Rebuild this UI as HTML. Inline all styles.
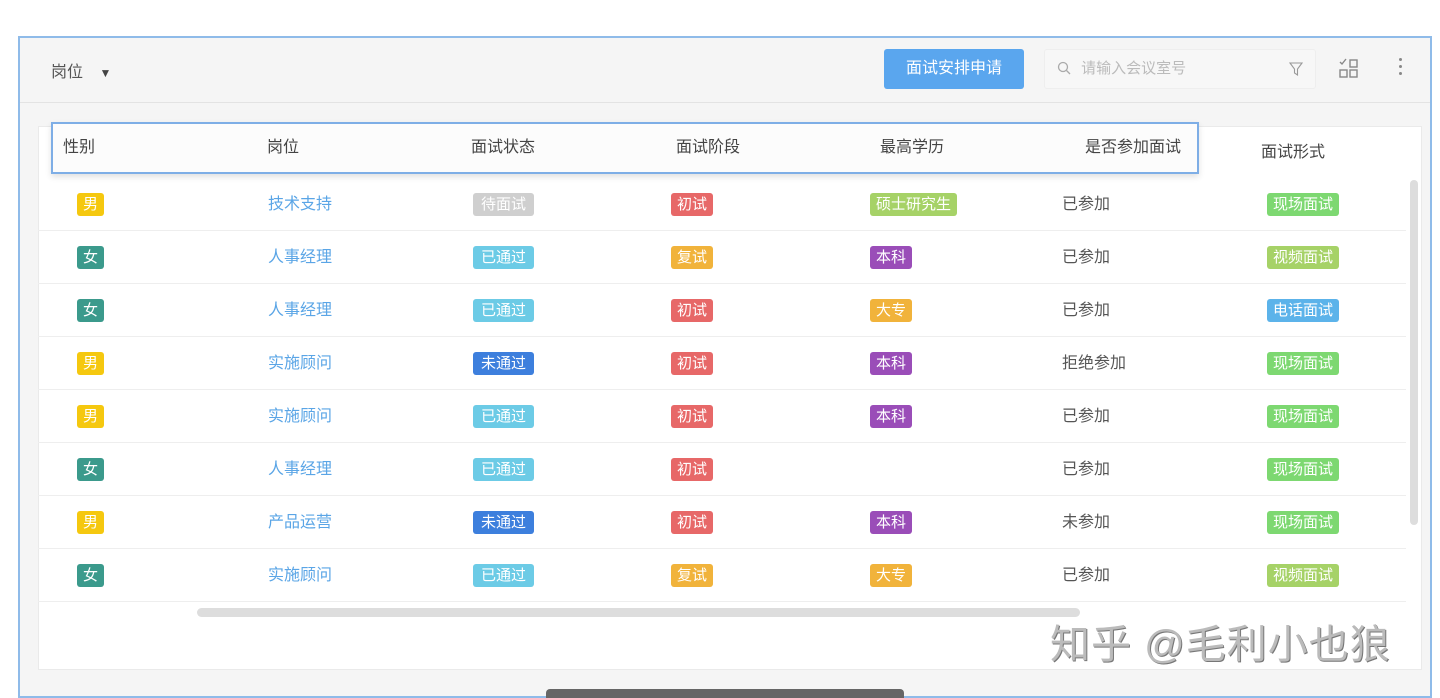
<!DOCTYPE html>
<html><head><meta charset="utf-8"><style>
*{margin:0;padding:0;box-sizing:border-box}
body{width:1440px;height:698px;background:#fff;position:relative;overflow:hidden;font-family:"Liberation Sans","Noto Sans CJK SC",sans-serif;font-size:16px;color:#555}
.frame{position:absolute;left:18px;top:36px;width:1414px;height:662px;border:2px solid #8fbbe9;background:#f5f5f5}
.a{position:absolute}
.card{left:18px;top:88px;width:1384px;height:544px;background:#fff;border:1px solid #eaeaea}
.tag{position:absolute;height:23px;line-height:23px;color:#fff;font-size:15px;border-radius:3px;padding:0 6px;text-align:center}
.row{position:absolute;left:38px;width:1368px;height:53px;border-bottom:1px solid #eee}
.t{position:absolute;line-height:23px;font-size:16px}
.link{color:#5aa5e6}
</style></head><body>
<div class="frame">
 <div class="a" style="left:31px;top:20px;font-size:16px;color:#555">岗位 <span style="font-size:12px;margin-left:12px;color:#444">▼</span></div>
 <div class="a" style="left:0;top:64px;width:1410px;height:1px;background:#e3e3e3"></div>
 <div class="a" style="left:864px;top:11px;width:140px;height:40px;background:#5aa6ee;border-radius:3px;color:#fff;text-align:center;line-height:40px;font-size:16px">面试安排申请</div>
 <div class="a" style="left:1024px;top:11px;width:272px;height:40px;background:#f7f7f7;border:1px solid #eee;border-radius:3px;color:#bbb;line-height:38px;font-size:15px;padding-left:12px">
  <svg width="14" height="14" viewBox="0 0 14 14" style="vertical-align:-2px"><circle cx="6" cy="6" r="4.5" fill="none" stroke="#aaa" stroke-width="1.3"/><path d="M9.5 9.5L13 13" stroke="#aaa" stroke-width="1.3"/></svg>
  <span style="margin-left:6px">请输入会议室号</span>
  <svg class="a" style="left:244px;top:12px" width="14" height="14" viewBox="0 0 14 14"><path d="M1 1H13L8.5 7V13L5.5 11V7Z" fill="none" stroke="#999" stroke-width="1.1"/></svg>
 </div>
 <svg class="a" style="left:1318px;top:20px" width="22" height="22" viewBox="0 0 22 22" fill="none" stroke="#888" stroke-width="1.4"><path d="M2 4L4 6L8 1"/><rect x="12" y="2" width="7" height="7"/><rect x="2" y="12" width="7" height="7"/><rect x="12" y="12" width="7" height="7"/></svg>
 <div class="a" style="left:1379px;top:20px;width:4px;">
  <div style="width:3px;height:3px;background:#888;border-radius:50%;margin-bottom:4px"></div><div style="width:3px;height:3px;background:#888;border-radius:50%;margin-bottom:4px"></div><div style="width:3px;height:3px;background:#888;border-radius:50%"></div></div>

 <div class="a card">
  <div class="t" style="left:1222px;top:14px;color:#444">面试形式</div>
  <div class="a" style="left:12px;top:-5px;width:1148px;height:52px;border:2px solid #7eaee6;background:#fcfcfc;box-shadow:0 3px 6px rgba(0,0,0,.12)">
   <div class="t" style="left:10px;top:12px;color:#444">性别</div>
   <div class="t" style="left:214px;top:12px;color:#444">岗位</div>
   <div class="t" style="left:418px;top:12px;color:#444">面试状态</div>
   <div class="t" style="left:623px;top:12px;color:#444">面试阶段</div>
   <div class="t" style="left:827px;top:12px;color:#444">最高学历</div>
   <div class="t" style="left:1032px;top:12px;color:#444">是否参加面试</div>
  </div>
 </div>
</div>
<div class="a" style="left:1410px;top:180px;width:8px;height:345px;background:#ddd;border-radius:4px"></div>
<div class="a" style="left:197px;top:608px;width:883px;height:9px;background:#ddd;border-radius:5px"></div>
<div class="a" style="left:546px;top:689px;width:358px;height:9px;background:#666;border-radius:4px 4px 0 0"></div>

<div class="row" style="top:178px"><span class="tag" style="left:39px;top:15px;background:#f5c80f">男</span><span class="t link" style="left:230px;top:15px">技术支持</span><span class="tag" style="left:435px;top:15px;background:#cfcfcf;width:61px">待面试</span><span class="tag" style="left:633px;top:15px;background:#e76868">初试</span><span class="tag" style="left:832px;top:15px;background:#a6d267">硕士研究生</span><span class="t" style="left:1024px;top:15px">已参加</span><span class="tag" style="left:1229px;top:15px;background:#7dd871">现场面试</span></div>
<div class="row" style="top:231px"><span class="tag" style="left:39px;top:15px;background:#3b9a8c">女</span><span class="t link" style="left:230px;top:15px">人事经理</span><span class="tag" style="left:435px;top:15px;background:#6ccbe6;width:61px">已通过</span><span class="tag" style="left:633px;top:15px;background:#f1b33b">复试</span><span class="tag" style="left:832px;top:15px;background:#9a4db8">本科</span><span class="t" style="left:1024px;top:15px">已参加</span><span class="tag" style="left:1229px;top:15px;background:#a6d267">视频面试</span></div>
<div class="row" style="top:284px"><span class="tag" style="left:39px;top:15px;background:#3b9a8c">女</span><span class="t link" style="left:230px;top:15px">人事经理</span><span class="tag" style="left:435px;top:15px;background:#6ccbe6;width:61px">已通过</span><span class="tag" style="left:633px;top:15px;background:#e76868">初试</span><span class="tag" style="left:832px;top:15px;background:#f1b33b">大专</span><span class="t" style="left:1024px;top:15px">已参加</span><span class="tag" style="left:1229px;top:15px;background:#5cb3ea">电话面试</span></div>
<div class="row" style="top:337px"><span class="tag" style="left:39px;top:15px;background:#f5c80f">男</span><span class="t link" style="left:230px;top:15px">实施顾问</span><span class="tag" style="left:435px;top:15px;background:#3d7fdd;width:61px">未通过</span><span class="tag" style="left:633px;top:15px;background:#e76868">初试</span><span class="tag" style="left:832px;top:15px;background:#9a4db8">本科</span><span class="t" style="left:1024px;top:15px">拒绝参加</span><span class="tag" style="left:1229px;top:15px;background:#7dd871">现场面试</span></div>
<div class="row" style="top:390px"><span class="tag" style="left:39px;top:15px;background:#f5c80f">男</span><span class="t link" style="left:230px;top:15px">实施顾问</span><span class="tag" style="left:435px;top:15px;background:#6ccbe6;width:61px">已通过</span><span class="tag" style="left:633px;top:15px;background:#e76868">初试</span><span class="tag" style="left:832px;top:15px;background:#9a4db8">本科</span><span class="t" style="left:1024px;top:15px">已参加</span><span class="tag" style="left:1229px;top:15px;background:#7dd871">现场面试</span></div>
<div class="row" style="top:443px"><span class="tag" style="left:39px;top:15px;background:#3b9a8c">女</span><span class="t link" style="left:230px;top:15px">人事经理</span><span class="tag" style="left:435px;top:15px;background:#6ccbe6;width:61px">已通过</span><span class="tag" style="left:633px;top:15px;background:#e76868">初试</span><span class="t" style="left:1024px;top:15px">已参加</span><span class="tag" style="left:1229px;top:15px;background:#7dd871">现场面试</span></div>
<div class="row" style="top:496px"><span class="tag" style="left:39px;top:15px;background:#f5c80f">男</span><span class="t link" style="left:230px;top:15px">产品运营</span><span class="tag" style="left:435px;top:15px;background:#3d7fdd;width:61px">未通过</span><span class="tag" style="left:633px;top:15px;background:#e76868">初试</span><span class="tag" style="left:832px;top:15px;background:#9a4db8">本科</span><span class="t" style="left:1024px;top:15px">未参加</span><span class="tag" style="left:1229px;top:15px;background:#7dd871">现场面试</span></div>
<div class="row" style="top:549px"><span class="tag" style="left:39px;top:15px;background:#3b9a8c">女</span><span class="t link" style="left:230px;top:15px">实施顾问</span><span class="tag" style="left:435px;top:15px;background:#6ccbe6;width:61px">已通过</span><span class="tag" style="left:633px;top:15px;background:#f1b33b">复试</span><span class="tag" style="left:832px;top:15px;background:#f1b33b">大专</span><span class="t" style="left:1024px;top:15px">已参加</span><span class="tag" style="left:1229px;top:15px;background:#a6d267">视频面试</span></div>

<div class="a" style="left:1050px;top:612px;font-size:40px;color:#bbb;letter-spacing:1px;text-shadow:1px 1px 0 #777">知乎 @毛利小也狼</div>
</body></html>
